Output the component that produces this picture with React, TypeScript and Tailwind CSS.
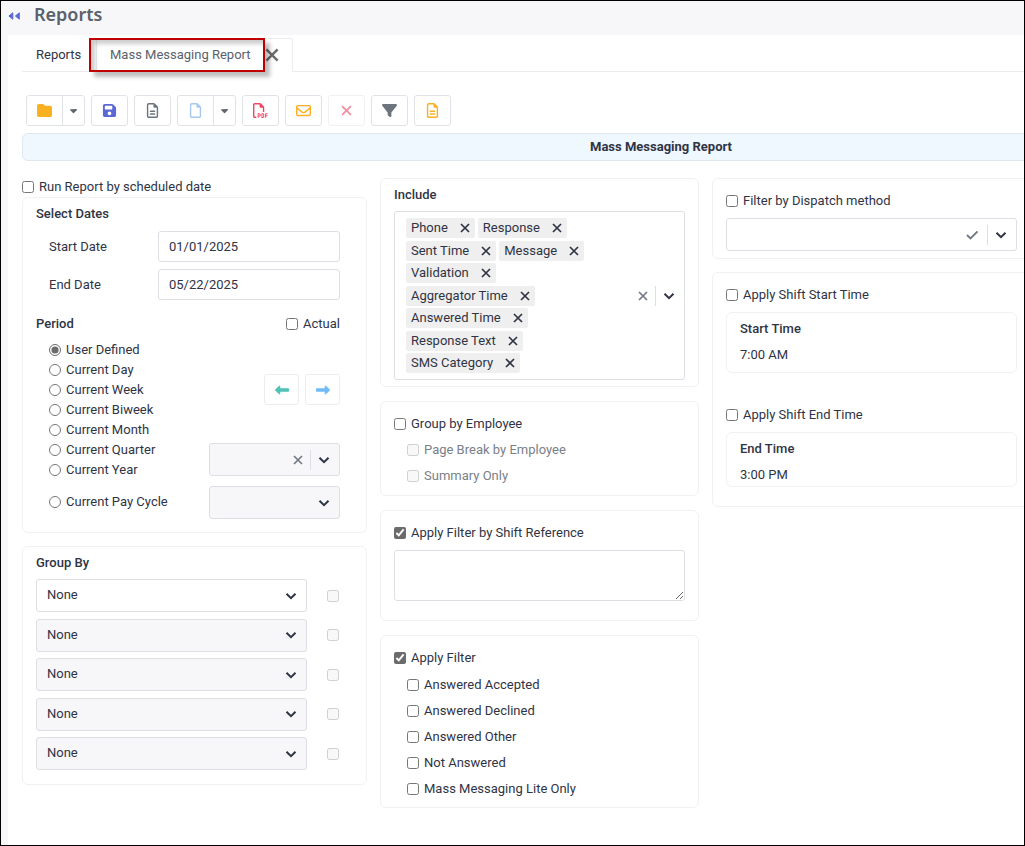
import { useState } from "react";
import clsx from "clsx";
import {
  FaCaretDown,
  FaFilter,
  FaFloppyDisk,
  FaFolder,
  FaLeftLong,
  FaRegEnvelope,
  FaRegFile,
  FaRegFileLines,
  FaRegFilePdf,
  FaRightLong,
} from "react-icons/fa6";

const periods = [
  "User Defined",
  "Current Day",
  "Current Week",
  "Current Biweek",
  "Current Month",
  "Current Quarter",
  "Current Year",
];

const includeFields = [
  "Phone",
  "Response",
  "Sent Time",
  "Message",
  "Validation",
  "Aggregator Time",
  "Answered Time",
  "Response Text",
  "SMS Category",
];

const answerFilters = [
  "Answered Accepted",
  "Answered Declined",
  "Answered Other",
  "Not Answered",
  "Mass Messaging Lite Only",
];

interface CardProps {
  className?: string;
  children: React.ReactNode;
}

const Card: React.FC<CardProps> = ({ className, children }) => (
  <section className={clsx("rounded-md border border-[#f0f1f3]", className)}>
    {children}
  </section>
);

interface CheckProps {
  label: string;
  checked?: boolean;
  disabled?: boolean;
  className?: string;
}

const Check: React.FC<CheckProps> = ({ label, checked, disabled, className }) => (
  <label
    className={clsx(
      "flex items-center gap-[5px] whitespace-nowrap leading-5",
      disabled && "text-[#7b8088]",
      className
    )}
  >
    <input
      type="checkbox"
      defaultChecked={checked}
      disabled={disabled}
      className="size-3 accent-[#6b6b6b]"
    />
    {label}
  </label>
);

const Chevron = () => (
  <svg viewBox="0 0 12 8" className="h-2 w-3 shrink-0" aria-hidden="true">
    <path
      d="M1.500 1.700 6 6.100l4.500-4.400"
      fill="none"
      stroke="currentColor"
      strokeWidth="2"
    />
  </svg>
);

interface CrossProps {
  className?: string;
}

const Cross: React.FC<CrossProps> = ({ className }) => (
  <svg viewBox="0 0 10 10" className={clsx("shrink-0", className)} aria-hidden="true">
    <path d="M1 1l8 8M9 1L1 9" fill="none" stroke="currentColor" strokeWidth="1.700" />
  </svg>
);

const Tick = () => (
  <svg viewBox="0 0 12 10" className="h-[10px] w-3 shrink-0" aria-hidden="true">
    <path d="M1 5l3.500 3.500L11.500 1.500" fill="none" stroke="currentColor" strokeWidth="1.800" />
  </svg>
);

const Rewind = () => (
  <svg viewBox="0 0 12 8" className="h-2 w-3" aria-hidden="true">
    <path
      d="M4.800.8v6.400L.9 4zM11.300.8v6.400L7.400 4z"
      fill="currentColor"
      stroke="currentColor"
      strokeLinejoin="round"
    />
  </svg>
);

interface DropDownProps {
  label: string;
  value?: string;
  shaded?: boolean;
  action?: "clear" | "check";
  className?: string;
}

const DropDown: React.FC<DropDownProps> = ({
  label,
  value = "",
  shaded,
  action,
  className,
}) => (
  <div
    className={clsx(
      "flex h-[33px] items-center rounded-[3px] border border-[#dcdfe4] pr-[9px]",
      shaded && "bg-[#f7f7fa]",
      className
    )}
  >
    <select
      aria-label={label}
      defaultValue={value}
      className="h-full min-w-0 flex-1 appearance-none bg-transparent pb-px pl-[10px] outline-none"
    >
      <option>{value}</option>
    </select>
    {action && (
      <button
        type="button"
        aria-label={action === "clear" ? "Clear" : "Select all"}
        className={clsx("text-[#737983]", action === "clear" ? "mr-[7px]" : "mr-[9px]")}
      >
        {action === "clear" ? <Cross className="size-[10px]" /> : <Tick />}
      </button>
    )}
    {action && <span className="mr-[7px] h-5 w-px bg-[#dcdfe4]" />}
    <Chevron />
  </div>
);

interface ToolProps {
  label: string;
  className?: string;
  children: React.ReactNode;
}

const Tool: React.FC<ToolProps> = ({ label, className, children }) => (
  <button
    type="button"
    aria-label={label}
    className={clsx(
      "flex h-[31px] w-[37px] items-center justify-center rounded-[3px] border border-[#dfe2e7]",
      className
    )}
  >
    {children}
  </button>
);

const Toolbar = () => (
  <div className="ml-1 mt-[23px] flex gap-[6px]">
    <div className="flex">
      <Tool label="Open" className="rounded-r-none text-[#f9b122]">
        <FaFolder className="size-[15px]" />
      </Tool>
      <Tool label="Open options" className="-ml-px w-[23px]! rounded-l-none text-[#5f666e]">
        <FaCaretDown className="size-[11px]" />
      </Tool>
    </div>
    <Tool label="Save" className="text-[#5c68d6]">
      <FaFloppyDisk className="size-[15px]" />
    </Tool>
    <Tool label="Report" className="text-[#6c757d]">
      <FaRegFileLines className="size-[15px]" />
    </Tool>
    <div className="flex">
      <Tool label="New" className="rounded-r-none text-[#a5c8ec]">
        <FaRegFile className="size-[15px]" />
      </Tool>
      <Tool label="New options" className="-ml-px w-[23px]! rounded-l-none text-[#5f666e]">
        <FaCaretDown className="size-[11px]" />
      </Tool>
    </div>
    <Tool label="Export PDF" className="text-[#ef4565]">
      <FaRegFilePdf className="size-[15px]" />
    </Tool>
    <Tool label="Email" className="text-[#f9b122]">
      <FaRegEnvelope className="size-[15px]" />
    </Tool>
    <Tool label="Delete" className="border-[#f0f1f3]! text-[#f58fa1]">
      <Cross className="size-[11px]" />
    </Tool>
    <Tool label="Filter" className="text-[#6c757d]">
      <FaFilter className="size-[15px]" />
    </Tool>
    <Tool label="Notes" className="text-[#f9b122]">
      <FaRegFileLines className="size-[15px]" />
    </Tool>
  </div>
);

const SelectDates = () => {
  const [period, setPeriod] = useState<string>("User Defined");

  const radio = (name: string) => (
    <label key={name} className="flex h-5 items-center gap-[5px] whitespace-nowrap">
      <input
        type="radio"
        name="period"
        checked={period === name}
        onChange={() => setPeriod(name)}
        className="size-3 accent-[#6b6b6b]"
      />
      {name}
    </label>
  );

  return (
    <Card className="h-[336px] px-[13px] pt-[6px]">
      <h2 className="font-medium leading-5">Select Dates</h2>
      <div className="mt-[7px] flex flex-col gap-[7px] px-[13px]">
        <div className="flex items-center justify-between">
          <label htmlFor="start">Start Date</label>
          <input
            id="start"
            defaultValue="01/01/2025"
            className="h-[31px] w-[182px] rounded-[3px] border border-[#dcdfe4] px-[10px]"
          />
        </div>
        <div className="flex items-center justify-between">
          <label htmlFor="end">End Date</label>
          <input
            id="end"
            defaultValue="05/22/2025"
            className="h-[31px] w-[182px] rounded-[3px] border border-[#dcdfe4] px-[10px]"
          />
        </div>
      </div>
      <div className="mt-[14px] flex justify-between pr-[13px]">
        <h2 className="font-medium leading-5">Period</h2>
        <Check label="Actual" />
      </div>
      <div className="mt-[6px] flex justify-between px-[13px]">
        <div>
          {periods.map(radio)}
          <div className="mt-3">{radio("Current Pay Cycle")}</div>
        </div>
        <div className="w-[131px] pt-[34px]">
          <div className="flex justify-end gap-[6px]">
            <Tool label="Previous" className="w-[35px]! border-[#ebedf0]! text-[#4fc1b5]">
              <FaLeftLong className="size-[14px]" />
            </Tool>
            <Tool label="Next" className="w-[35px]! border-[#ebedf0]! text-[#70bcfa]">
              <FaRightLong className="size-[14px]" />
            </Tool>
          </div>
          <DropDown label="Year" shaded action="clear" className="mt-[38px]" />
          <DropDown label="Pay cycle" shaded className="mt-[10px]" />
        </div>
      </div>
    </Card>
  );
};

const GroupBy = () => (
  <Card className="mt-[13px] h-[239px] px-[13px] pt-[6px]">
    <h2 className="font-medium leading-5">Group By</h2>
    <div className="mt-[6px] flex h-[191px] flex-col justify-between">
      {[1, 2, 3, 4, 5].map((level) => (
        <div key={level} className="flex items-center gap-5">
          <DropDown
            label={`Group level ${level}`}
            value="None"
            shaded={level > 1}
            className="flex-1"
          />
          <input
            type="checkbox"
            disabled
            aria-label={`Page break ${level}`}
            className="mr-[14px] size-3"
          />
        </div>
      ))}
    </div>
  </Card>
);

const Include = () => (
  <Card className="h-[209px] px-[13px] pt-[6px]">
    <h2 className="font-medium leading-5">Include</h2>
    <div className="mt-[6px] flex h-[169px] items-center rounded-[3px] border border-[#dcdfe4] pl-[11px] pr-[9px]">
      <ul className="mr-8 flex h-[155px] flex-1 flex-wrap content-between gap-x-[3px]">
        {includeFields.map((field) => (
          <li
            key={field}
            className="flex h-5 items-center gap-3 rounded-[2px] bg-[#efefef] px-[5px] leading-5"
          >
            {field}
            <button type="button" aria-label={`Remove ${field}`}>
              <Cross className="size-[10px]" />
            </button>
          </li>
        ))}
      </ul>
      <button type="button" aria-label="Clear all" className="mr-[7px] text-[#737983]">
        <Cross className="size-[10px]" />
      </button>
      <span className="mr-[7px] h-5 w-px bg-[#dcdfe4]" />
      <Chevron />
    </div>
  </Card>
);

const App = () => {
  return (
    <div className="min-h-screen overflow-hidden border border-black bg-[#f7f7fa] font-['Roboto','Liberation_Sans',sans-serif] text-[13px] text-[#2f3444]">
      <header className="flex h-[34px] items-center gap-[14px] pb-2 pl-[7px]">
        <button type="button" aria-label="Collapse menu" className="pt-1 text-[#5c68d6]">
          <Rewind />
        </button>
        <h1 className="font-['Noto_Sans','Open_Sans',sans-serif] text-lg leading-6 font-semibold text-[#5a616b]">
          Reports
        </h1>
      </header>

      <main className="ml-[7px] min-h-[810px] bg-white pl-[14px] pt-[3px]">
        {/* tabs */}
        <nav className="flex h-[34px]">
          <div className="flex w-[74px] items-center border-b border-[#ebedf0] pl-[14px]">
            <a href="#reports">Reports</a>
          </div>
          <div className="relative flex w-[197px] items-center rounded-t-[3px] border border-b-0 border-[#ebedf0] pb-[2px] pl-[13px]">
            <a href="#mass" className="whitespace-nowrap text-[#5a616b]">
              Mass Messaging Report
            </a>
            <button type="button" aria-label="Close tab" className="ml-[14px] text-[#6b6b6b]">
              <Cross className="size-[14px]" />
            </button>
            <span className="pointer-events-none absolute -left-2 -top-px h-[34px] w-[176px] border-2 border-[#bf0000] shadow-[5px_5px_4px_rgba(0,0,0,0.25),inset_4px_4px_4px_rgba(0,0,0,0.2)]" />
          </div>
          <div className="flex-1 border-b border-[#ebedf0]" />
        </nav>

        <Toolbar />

        {/* the banner is wider than the window and runs off its right side */}
        <div className="-mr-[276px] mt-[7px] rounded-md border border-[#dfe7f1] bg-[#eff7ff] text-center font-bold leading-[26px]">
          Mass Messaging Report
        </div>

        <div className="mt-[17px] flex items-start gap-[13px]">
          <div className="w-[345px]">
            <Check label="Run Report by scheduled date" className="mb-[2px] h-[17px]" />
            <SelectDates />
            <GroupBy />
          </div>

          <div className="flex w-[319px] flex-col gap-[14px]">
            <Include />
            <Card className="h-[95px] px-[13px] pt-3">
              <Check label="Group by Employee" />
              <div className="mt-[6px] flex flex-col gap-[6px] pl-[13px]">
                <Check label="Page Break by Employee" disabled />
                <Check label="Summary Only" disabled />
              </div>
            </Card>
            <Card className="h-[111px] px-[13px] pt-3">
              <Check label="Apply Filter by Shift Reference" checked />
              <textarea
                aria-label="Shift reference"
                className="mt-[7px] block h-[51px] w-full rounded-[3px] border border-[#dcdfe4] p-2"
              />
            </Card>
            <Card className="h-[173px] px-[13px] pt-3">
              <Check label="Apply Filter" checked />
              <div className="mt-[7px] flex flex-col gap-[6px] pl-[13px]">
                {answerFilters.map((name) => (
                  <Check key={name} label={name} />
                ))}
              </div>
            </Card>
          </div>

          <div className="-mr-2 flex flex-1 flex-col gap-[13px]">
            <Card className="h-[81px] pl-[13px] pr-[14px] pt-3">
              <Check label="Filter by Dispatch method" />
              <DropDown label="Dispatch method" action="check" className="mt-[7px]" />
            </Card>
            <Card className="h-[235px] pl-[13px] pr-[14px] pt-3">
              <Check label="Apply Shift Start Time" />
              <Card className="mt-[7px] h-[61px] px-[13px] pt-[6px]">
                <h2 className="font-medium leading-5">Start Time</h2>
                <p className="mt-[6px] leading-5">7:00 AM</p>
              </Card>
              <Check label="Apply Shift End Time" className="mt-8" />
              <Card className="mt-[7px] h-[55px] px-[13px] pt-[6px]">
                <h2 className="font-medium leading-5">End Time</h2>
                <p className="mt-[6px] leading-5">3:00 PM</p>
              </Card>
            </Card>
          </div>
        </div>
      </main>
    </div>
  );
};

export default App;
